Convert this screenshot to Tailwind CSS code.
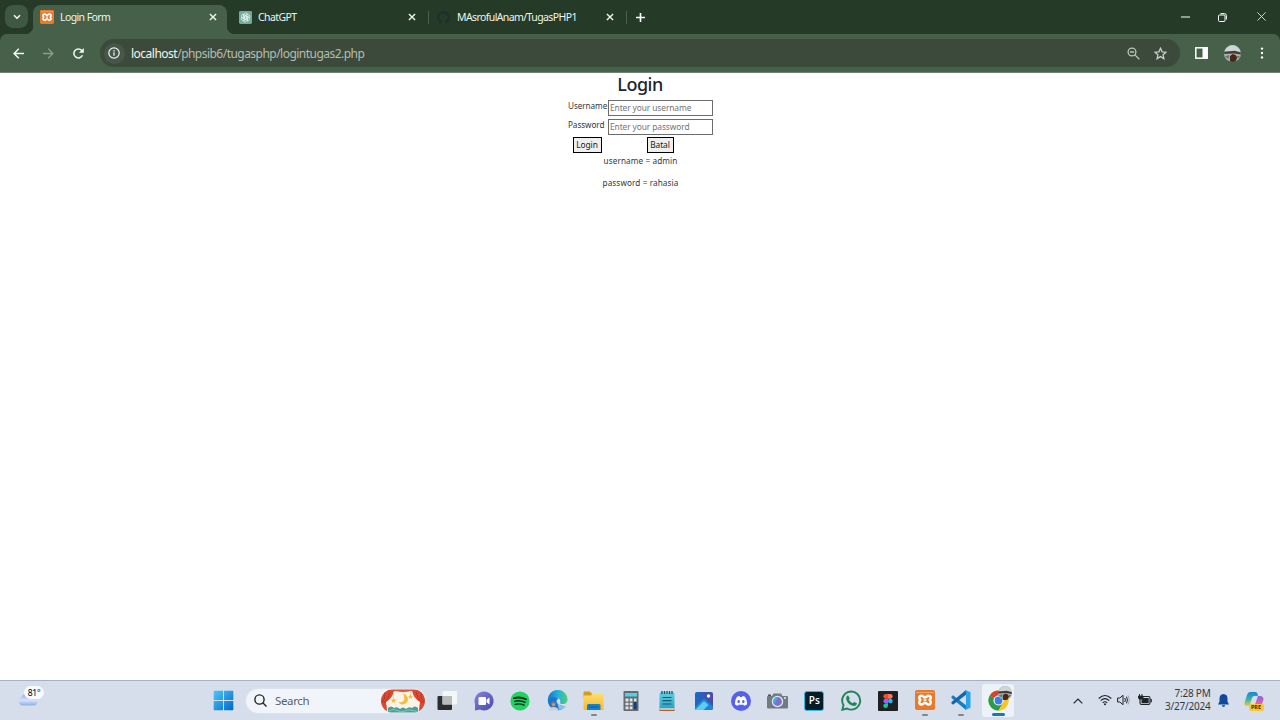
<!DOCTYPE html>
<html lang="en">
<head>
<meta charset="utf-8">
<title>Login Form</title>
<script src="https://cdn.jsdelivr.net/npm/@tailwindcss/browser@4"></script>
</head>
<body class="w-[1280px] h-[720px] overflow-hidden flex flex-col bg-white font-['Noto_Sans',sans-serif] whitespace-nowrap">

<svg class="absolute size-0">
  <defs>
    <linearGradient id="win" x1="0" y1="0" x2="1" y2="1"><stop offset="0" stop-color="#4fc8f7"/><stop offset="1" stop-color="#0067c5"/></linearGradient>
    <linearGradient id="chat" x1="0" y1="0" x2="1" y2="1"><stop offset="0" stop-color="#8483dc"/><stop offset="1" stop-color="#4b47a8"/></linearGradient>
    <linearGradient id="edge" x1="0" y1="0" x2="1" y2="0"><stop offset="0" stop-color="#1a72cf"/><stop offset=".55" stop-color="#25b4d8"/><stop offset="1" stop-color="#52cf70"/></linearGradient>
    <linearGradient id="fold" x1="0" y1="0" x2="0" y2="1"><stop offset="0" stop-color="#ffdb6b"/><stop offset="1" stop-color="#f5b92e"/></linearGradient>
    <linearGradient id="note" x1="0" y1="0" x2="0" y2="1"><stop offset="0" stop-color="#5cd0e2"/><stop offset="1" stop-color="#2f9fbc"/></linearGradient>
    <linearGradient id="pho" x1="0" y1="0" x2="1" y2="0"><stop offset="0" stop-color="#1a69cb"/><stop offset="1" stop-color="#5148a5"/></linearGradient>
    <linearGradient id="cop1" x1="0" y1="0" x2="0" y2="1"><stop offset="0" stop-color="#1d83d8"/><stop offset=".5" stop-color="#30b5ad"/><stop offset="1" stop-color="#f5c534"/></linearGradient>
    <linearGradient id="cop2" x1="0" y1="0" x2="0" y2="1"><stop offset="0" stop-color="#8a63e8"/><stop offset=".5" stop-color="#df62b0"/><stop offset="1" stop-color="#f58a55"/></linearGradient>
    <linearGradient id="cloud" x1="0" y1="0" x2="0" y2="1"><stop offset="0" stop-color="#8fa3d9"/><stop offset=".55" stop-color="#d5e2fb"/><stop offset="1" stop-color="#8eafe8"/></linearGradient>
    <symbol id="xampp" viewBox="0 0 20 20">
      <rect width="20" height="20" rx="2" fill="#e87a2c"/>
      <path d="M1 2.500H19" stroke="#f6b98a" stroke-width=".7"/>
      <path d="M6.500 5.800C3.800 5.800 3.600 8.300 5.300 10 3.600 12 3.900 14.600 6.500 14.600 8.500 14.600 8.300 12.800 10 12.800S11.500 14.600 13.500 14.600C16.100 14.600 16.400 12 14.700 10 16.400 8.300 16.200 5.800 13.500 5.800 11.500 5.800 11.700 7.500 10 7.500S8.500 5.800 6.500 5.800Z" fill="none" stroke="#fff" stroke-width="2.500" stroke-linejoin="round"/>
      <path d="M8.500 10.100H11.500" stroke="#fff" stroke-width="1.600"/>
    </symbol>
    <symbol id="avatar" viewBox="0 0 16 16">
      <circle cx="8" cy="8" r="8" fill="#a9b7b5"/>
      <path d="M1.500 4Q8-3.500 14.500 4L15.500 6H.5Z" fill="#cbd8d8"/>
      <path d="M.2 6.300L10 5.500 15.800 7V9L9 8 .2 8.500Z" fill="#4b3c31"/>
      <path d="M5.500 10.500L8 8.500 11 9.500 12.500 12 11 15.300Q8 16.500 5.500 15.300Z" fill="#49281a"/>
      <path d="M1 10.500L5 9.500 4 13.500ZM12 10L15 10.500 13.500 13Z" fill="#687367"/>
    </symbol>
    <symbol id="close" viewBox="0 0 8 8"><path d="M.9.9L7.1 7.1M7.1.9L.9 7.1" stroke="#eff5ee" stroke-width="1.4"/></symbol>
  </defs>
</svg>

<!-- Tab strip -->
<header class="h-[34px] shrink-0 bg-[#253b28] flex items-end text-[#eef4ed] text-[10.5px]">
  <div class="w-[33px] h-[34px] pl-[5px] pt-[5px] bg-[radial-gradient(circle_at_0_0,transparent_8px,#46604a_8.5px)] bg-[length:8px_8px] bg-no-repeat bg-[position:25px_26px]">
    <button class="size-[23px] rounded-[8px] bg-[#3f5843] flex items-center justify-center">
      <svg class="w-[8px] h-[6px]" viewBox="0 0 8 6" fill="none" stroke="#fff" stroke-width="1.5"><path d="M1 1.2L4 4.2 7 1.2"/></svg>
    </button>
  </div>
  <div class="w-[194px] h-[29px] rounded-t-[8px] bg-[#46604a] flex items-center pl-[7px] pr-[10px] pb-[5px]">
    <svg class="size-[14px]"><use href="#xampp"/></svg>
    <span class="ml-[6px] flex-1 pt-[1px] tracking-[-0.6px]">Login Form</span>
    <svg class="size-[8px]"><use href="#close"/></svg>
  </div>
  <div class="w-[8px] h-[8px] bg-[radial-gradient(circle_at_100%_0,transparent_8px,#46604a_8.5px)]"></div>
  <div class="w-[193px] h-[34px] flex items-center pl-[4px] pr-[12px]">
    <svg class="size-[13px]" viewBox="0 0 14 14"><rect width="14" height="14" rx="1.500" fill="#74aa9c"/><g fill="none" stroke="#edf8f3" stroke-width=".75"><path id="petal" d="M5.200 7.900V4.300A2.200 2.200 0 0 1 9.300 3.300L6.300 5V6.800"/><use href="#petal" transform="rotate(60 7 7)"/><use href="#petal" transform="rotate(120 7 7)"/><use href="#petal" transform="rotate(180 7 7)"/><use href="#petal" transform="rotate(240 7 7)"/><use href="#petal" transform="rotate(300 7 7)"/></g></svg>
    <span class="ml-[6px] flex-1 pt-[1px] tracking-[-0.6px]">ChatGPT</span>
    <svg class="size-[8px]"><use href="#close"/></svg>
  </div>
  <div class="w-[198px] h-[34px] flex items-center pr-[12px]">
    <i class="w-px h-[13px] bg-[#4a624c]"></i>
    <svg class="size-[13px] ml-[8px]" viewBox="0 0 16 16" fill="#202f30"><path d="M8 0C3.58 0 0 3.58 0 8c0 3.54 2.29 6.53 5.47 7.59.4.07.55-.17.55-.38v-1.490c-2.230.49-2.700-.94-2.700-.94-.36-.92-.89-1.170-.89-1.170-.72-.5.06-.49.06-.49.8.06 1.230.83 1.230.83.71 1.210 1.870.86 2.330.66.07-.52.28-.87.51-1.070-1.780-.2-3.640-.89-3.640-3.950 0-.87.31-1.590.82-2.150-.08-.2-.36-1.020.08-2.120 0 0 .67-.22 2.200.82a7.600 7.600 0 0 1 4 0c1.530-1.040 2.200-.82 2.200-.82.44 1.100.16 1.920.08 2.120.51.56.82 1.270.82 2.150 0 3.070-1.870 3.750-3.650 3.950.29.25.54.73.54 1.480v2.190c0 .21.15.46.55.38A8 8 0 0 0 8 0"/></svg>
    <span class="ml-[7px] flex-1 pt-[1px] tracking-[-0.6px]">MAsrofulAnam/TugasPHP1</span>
    <svg class="size-[8px]"><use href="#close"/></svg>
  </div>
  <div class="h-[34px] flex items-center">
    <i class="w-px h-[13px] bg-[#4a624c]"></i>
    <svg class="size-[9px] ml-[9px]" viewBox="0 0 9 9" stroke="#fff" stroke-width="1.6"><path d="M4.500 0V9M0 4.500H9"/></svg>
  </div>
  <div class="ml-auto h-[34px] flex items-center pr-[14px]">
    <svg class="w-[9px] h-[9px]" viewBox="0 0 9 9"><path d="M0 4H9" stroke="#fff"/></svg>
    <svg class="size-[9px] ml-[28px]" viewBox="0 0 9 9" fill="none" stroke="#fff"><rect x=".5" y="2" width="6.500" height="6.500" rx="1"/><path d="M2.500.6H6.500Q8.400.6 8.400 2.500V6.500"/></svg>
    <svg class="size-[9px] ml-[30px] -mt-px" viewBox="0 0 9 9" stroke="#dfe7df" stroke-width=".9"><path d="M.4.4L8.600 8.600M8.600.4L.4 8.600"/></svg>
  </div>
</header>

<!-- Toolbar -->
<div class="h-[39px] shrink-0 bg-[#253b28]">
  <div class="h-full rounded-t-[7px] bg-[#46604a] border-b border-[#71836f] flex items-center pl-[13px] pr-[16px]">
    <svg class="size-[11px]" viewBox="0 0 11 11" fill="none" stroke="#f4f8f3" stroke-width="1.500"><path d="M11 5.500H1.200M5.800.8L1.100 5.500 5.800 10.200"/></svg>
    <svg class="size-[11px] ml-[19px]" viewBox="0 0 11 11" fill="none" stroke="#8a9c8b" stroke-width="1.300"><path d="M0 5.500H9.800M5.200.8L9.900 5.500 5.200 10.200"/></svg>
    <svg class="size-[11px] ml-[19px]" viewBox="0 0 11 11"><path d="M9.500 7.300A4.500 4.500 0 1 1 8.800 2.500L10 3.800" fill="none" stroke="#f4f8f3" stroke-width="1.500"/><path d="M10.800 0V4.800H6Z" fill="#f4f8f3"/></svg>
    <div class="ml-[16px] w-[1080px] h-[28px] rounded-full bg-[#3c4a3c] flex items-center pl-[3.5px] pr-[13px]">
      <div class="size-[21px] rounded-full bg-[#46564a] flex items-center justify-center">
        <svg class="size-[12px]" viewBox="0 0 12 12" fill="none" stroke="#f4f8f3" stroke-width="1.200"><circle cx="6" cy="6" r="5.200"/><path d="M6 5.300V8.800M6 3.100V4.400"/></svg>
      </div>
      <span class="ml-[6.5px] flex-1 pt-[1px] text-[12px] leading-[16px] tracking-[-0.53px] text-[#b4beb1]"><span class="text-[#f2f6f0] tracking-[-0.5px]">localhost</span>/phpsib6/tugasphp/logintugas2.php</span>
      <svg class="size-[13px]" viewBox="0 0 13 13" fill="none" stroke="#bbc6ba" stroke-width="1.300"><circle cx="5" cy="5" r="3.900"/><path d="M7.900 7.900L12.300 12.300M3 5H7"/></svg>
      <svg class="size-[13px] ml-[14px]" viewBox="0 0 13 13" fill="none" stroke="#c6d0c5" stroke-width="1.300"><path d="M6.500 1.300L8.100 4.800 12 5.200 9.100 7.800 9.900 11.600 6.500 9.600 3.100 11.600 3.900 7.800 1 5.200 4.900 4.800Z"/></svg>
    </div>
    <svg class="w-[13px] h-[12px] ml-[15px]" viewBox="0 0 13 12"><rect x=".8" y=".8" width="11.400" height="10.400" fill="none" stroke="#fff" stroke-width="1.500"/><path d="M7.500 1H12V11H7.500Z" fill="#fff"/></svg>
    <svg class="size-[17px] ml-[16px]"><use href="#avatar"/></svg>
    <svg class="w-[4px] h-[12px] ml-auto" viewBox="0 0 4 12" fill="#fff"><circle cx="2" cy="1.600" r="1.200"/><circle cx="2" cy="6" r="1.200"/><circle cx="2" cy="10.400" r="1.200"/></svg>
  </div>
</div>

<!-- Page -->
<main class="flex-1 min-h-0 flex flex-col items-center text-[#33373b] text-[8.2px]">
  <h1 class="h-[27px] text-[18px] leading-[22px] font-medium tracking-[-0.5px] text-[#212529]">Login</h1>
  <form class="w-[145px] flex flex-col">
    <div class="flex h-[19px]">
      <label class="w-[40px] pl-[0.5px] leading-[12px] tracking-[-0.08px]">Username</label>
      <input class="w-[105px] h-[16px] border border-[#6c6c6c] px-[1.5px] pb-[1px] placeholder:text-[#757575] text-[8.4px] tracking-[-0.1px]" placeholder="Enter your username">
    </div>
    <div class="flex h-[18px]">
      <label class="w-[40px] pl-[0.5px] leading-[12px] tracking-[-0.08px]">Password</label>
      <input class="w-[105px] h-[16px] border border-[#6c6c6c] px-[1.5px] pb-[1px] placeholder:text-[#757575] text-[8.4px] tracking-[-0.1px]" placeholder="Enter your password">
    </div>
    <div class="flex pl-[5px] gap-[45px] h-[17px] text-[8.4px] leading-[12px] text-[#222]">
      <button type="button" class="w-[29px] h-[16px] border border-black bg-[#efefef] tracking-[-0.1px]">Login</button>
      <button type="button" class="w-[27px] h-[16px] border border-black bg-[#efefef] tracking-[-0.1px]">Batal</button>
    </div>
  </form>
  <p class="h-[22px] leading-[13px] pl-[1px] tracking-[0.1px]">username = admin</p>
  <p class="leading-[13px] pl-[1px] tracking-[0.1px]">password = rahasia</p>
</main>

<!-- Taskbar -->
<footer class="h-[40px] shrink-0 bg-[#d5deea] border-t border-[#a9b1c0] flex items-center">
  <div class="w-[213px] h-full pl-[17px] pt-[5px] flex">
    <svg class="w-[21px] h-[14px] mt-[6px]" viewBox="0 0 21 14"><path d="M5 13.500A4.500 4.500 0 0 1 4.500 5 6.500 6.500 0 0 1 16 5.500 4 4 0 0 1 17 13.500Z" fill="url(#cloud)"/></svg>
    <span class="-ml-[14px] w-[20px] h-[13px] rounded-full bg-[#f8fafd] text-[8.5px] leading-[13px] text-center tracking-[-0.3px] text-black relative">81°</span>
  </div>
  <svg class="size-[21px]" viewBox="0 0 21 21" fill="url(#win)"><path d="M1.500.7H19.500Q20.300.7 20.300 1.500V19.500Q20.300 20.300 19.500 20.300H1.500Q.7 20.300.7 19.500V1.500Q.7.7 1.500.7Z"/><path d="M10.500 0V21M0 10.500H21" stroke="#d5deea"/></svg>
  <div class="ml-[11px] w-[182px] h-[26px] rounded-full bg-[#f1f5fb] border border-[#dbe2ec] flex items-center pl-[8px]">
    <svg class="size-[13px]" viewBox="0 0 13 13" fill="none" stroke="#202225" stroke-width="1.400"><circle cx="5.500" cy="5.500" r="4.600"/><path d="M8.800 8.800L12.500 12.500"/></svg>
    <span class="ml-[8px] flex-1 text-[11.5px] text-[#5b5f66] tracking-[-0.35px]">Search</span>
    <svg class="w-[45px] h-[24px]" viewBox="0 0 45 24">
      <clipPath id="pill"><rect y=".5" width="44" height="23" rx="11.500"/></clipPath>
      <g clip-path="url(#pill)">
        <rect width="45" height="24" fill="#faf3e6"/>
        <path d="M0 0H44V2Q37 4 30 2 22 4 15 2 8 4 0 2Z" fill="#e2553c"/>
        <path d="M0 1H13Q12 9 5 13 6 18 6 24H0ZM44 1H31Q32 9 39 13 38 18 38 24H44Z" fill="#d94a33"/>
        <path d="M4 3Q5 9 1 14M9 3Q8 9 3 14M40 3Q39 9 43 14M35 3Q36 9 41 14" stroke="#b53527" fill="none"/>
        <path d="M7 19Q10 16 13 19 16 17 19 20 22 17 25 20 28 17 31 19 34 16 37 19V24H7Z" fill="#4d9e98"/>
        <path d="M8 22Q12 19 16 21.500T24 22 32 21.500 38 22" stroke="#84c5ba" fill="none"/>
        <path d="M22 5A5.200 5.200 0 1 1 17.500 13.200Q22.500 14 23.300 10 23.700 7 22 5Z" fill="#f3bd3e"/>
        <path d="M12.500 8.500L13.300 10.500 15.500 10.700 13.800 12 14.400 14 12.500 12.900 10.700 14 11.300 12 9.600 10.700 11.700 10.500ZM29.500 5L30.200 6.700 32 6.900 30.700 8 31 9.800 29.500 8.900 28 9.800 28.300 8 27 6.900 28.800 6.700Z" fill="#f3bd3e"/>
        <path d="M12.500 3V9M29.500 3V6M22 3V6" stroke="#e8c987" stroke-width=".6"/>
      </g>
    </svg>
  </div>

  <nav class="ml-[1.5px] h-full grid grid-flow-col auto-cols-[36.75px] items-center justify-items-center">
    <svg class="size-[20px]" viewBox="0 0 20 20"><rect x=".5" y="5" width="14.500" height="14" rx="1" fill="#2d2d2f"/><rect x="5.500" y="0" width="14.500" height="13.500" rx="1" fill="#f9fafa" fill-opacity=".85"/><path d="M5.500 5H15V13.500H5.500Z" fill="#b9bbbd"/></svg>
    <svg class="size-[20px]" viewBox="0 0 20 20"><path d="M10 .5A9.500 9.500 0 1 1 6 18.600L1 19.500V13A9.500 9.500 0 0 1 10 .5Z" fill="url(#chat)"/><rect x="4.500" y="6" width="7.500" height="8" rx="1" fill="#fff"/><path d="M12.500 8.800L15.500 6.500V13.500L12.500 11.200Z" fill="#fff"/></svg>
    <svg class="size-[20px]" viewBox="0 0 20 20"><circle cx="10" cy="10" r="9.600" fill="#1fd362"/><g fill="none" stroke="#102816" stroke-linecap="round"><path d="M4 7.200Q10.500 5.400 16 8.300" stroke-width="1.800"/><path d="M4.700 10.400Q10 8.900 15 11.300" stroke-width="1.500"/><path d="M5.200 13.400Q10 12.200 14 14.200" stroke-width="1.300"/></g></svg>
    <svg class="size-[21px]" viewBox="0 0 21 21"><path d="M.8 10A9.700 9.700 0 0 1 20.500 9.500C20.500 13 17.500 14.500 14.500 14 12.500 13.500 13.500 12.500 13.200 10.500 12.500 7.500 7 6 .8 10Z" fill="url(#edge)"/><path d="M.8 10C4.500 5.500 10 7 11.500 9 8 9.500 8.500 16 18.500 16A9.800 9.800 0 0 1 .8 10Z" fill="#1976cf"/><path d="M10 11Q11 16.500 18.500 16 16 19.500 12 20Z" fill="#8fbdea"/><circle cx="6.500" cy="14" r="2.700" fill="#77736c"/><path d="M1.500 20.500Q2 17 6.500 17T11.500 20.500Z" fill="#cbd0d4"/><circle cx="6.500" cy="14.500" r="1.500" fill="#bca28c"/></svg>
    <div class="h-full flex flex-col items-center pt-[9px]">
      <svg class="size-[21px]" viewBox="0 0 21 21"><path d="M.5 2.500Q.5 1.500 1.500 1.500H7L9 4H18V8H.5Z" fill="#d99a22"/><path d="M.5 5.500H8L9.500 4H19Q20.500 4 20.500 5.500V19Q20.500 20 19.500 20H1.500Q.5 20 .5 19Z" fill="url(#fold)"/><path d="M4 20V15.500Q4 14 5.500 14H16Q17.500 14 17.500 15.500V20Z" fill="#1681ca"/><path d="M6 17H15.500" stroke="#0d5a9c"/></svg>
      <i class="mt-[3px] w-[6px] h-[2px] rounded-full bg-[#81868e]"></i>
    </div>
    <svg class="size-[20px]" viewBox="0 0 20 20"><rect x="2.500" width="15" height="20" rx="1" fill="#666b70"/><rect x="4" y="2" width="12" height="3.500" fill="#4fd1e8"/><path d="M4.500 7.500H7.500V10.500H4.500ZM8.700 7.500H11.500V10.500H8.700ZM13 7.500H15.500V10.500H13ZM4.500 11.700H7.500V14.300H4.500ZM8.700 11.700H11.500V14.300H8.700ZM4.500 15.500H7.500V18.300H4.500ZM8.700 15.500H11.500V18.300H8.700Z" fill="#e2e5e7"/><path d="M12.700 11H15.700V18.300H12.700Z" fill="#173f79"/></svg>
    <svg class="size-[20px]" viewBox="0 0 20 20"><rect x="2.500" y="1.500" width="15" height="16.500" rx="1" fill="url(#note)"/><path d="M2.500 18H17.500V20H2.500Z" fill="#b95b25"/><path d="M3 17.500H17V18.600H3Z" fill="#fff"/><path d="M5 0V3M7.500 0V3M10 0V3M12.500 0V3M15 0V3" stroke="#145569" stroke-width="1.300"/><path d="M5.500 6.500H14.500M5.500 9.700H14.500M5.500 13H14.500" stroke="#155a70" stroke-width="1.200"/></svg>
    <svg class="size-[20px]" viewBox="0 0 20 20"><rect x="1" y="1" width="18" height="18" rx="2" fill="url(#pho)"/><path d="M1 16L8.500 8.500Q10 7.200 11.500 8.500L19 15.500V17Q19 19 17 19H3Q1 19 1 17Z" fill="#1b86d2"/><path d="M1.500 18.500L9 10.800Q10 10 11 10.800L14.500 14 9.500 19H3Q2 19 1.500 18.500Z" fill="#5ccbf5"/><circle cx="14.500" cy="5" r="1.700" fill="#fff"/></svg>
    <svg class="size-[20px]" viewBox="0 0 20 20"><circle cx="10" cy="10" r="10" fill="#5561ea"/><path d="M6 5.800Q7.300 5.100 8.500 5L9 5.900H11L11.500 5Q12.700 5.100 14 5.800 16.500 9.500 16.200 13.200 14.800 14.400 13 14.800L12.200 13.600Q10 14.100 7.800 13.600L7 14.800Q5.200 14.400 3.800 13.200 3.500 9.500 6 5.800Z" fill="#fff"/><ellipse cx="7.700" cy="10.500" rx="1.300" ry="1.500" fill="#5561ea"/><ellipse cx="12.300" cy="10.500" rx="1.300" ry="1.500" fill="#5561ea"/></svg>
    <svg class="size-[21px]" viewBox="0 0 21 21"><path d="M6.500 3.500H14L15.500 6H20Q21 6 21 7V17.500Q21 18.500 20 18.500H1Q0 18.500 0 17.500V7Q0 6 1 6H5Z" fill="#737b82"/><path d="M1 4.500H4V6H1Z" fill="#4d555c"/><circle cx="10.500" cy="11.500" r="5.700" fill="#dfe8ee"/><circle cx="10.500" cy="11.500" r="4.400" fill="#7f70ce"/><path d="M7 14A4.400 4.400 0 0 1 11 7.100Z" fill="#35b3e8"/><circle cx="18" cy="8" r="1" fill="#eee"/></svg>
    <div class="size-[20px] rounded-[3px] border-[1.5px] border-[#31b9d9] bg-[#061d28] text-white text-[10px] leading-[16px] font-semibold text-center font-['Open_Sans',sans-serif]">Ps</div>
    <svg class="size-[21px]" viewBox="0 0 21 21"><path d="M1.300 19.700L2.500 15.200A9 9 0 1 1 6 18.500Z" fill="none" stroke="#218456" stroke-width="1.900"/><path d="M7 5.300L8.800 8.300 7.900 9.700Q9.300 12.300 11.800 13.200L13.100 11.900 15.900 13.300Q15.700 16 13 16 7 15 5.300 9.500 4.800 6.300 7 5.300Z" fill="#218456"/></svg>
    <svg class="size-[20px]" viewBox="0 0 20 20"><rect width="20" height="20" rx="1" fill="#202023"/><path d="M10 3H7.700A2.350 2.350 0 0 0 7.700 7.700H10Z" fill="#f24e1e"/><path d="M10 3H12.300A2.350 2.350 0 0 1 12.300 7.700H10Z" fill="#ff7262"/><path d="M10 7.700H7.700A2.350 2.350 0 0 0 7.700 12.400H10Z" fill="#a259ff"/><circle cx="12.350" cy="10" r="2.350" fill="#1abcfe"/><path d="M10 12.400H7.700A2.350 2.350 0 1 0 10 14.800Z" fill="#0acf83"/></svg>
    <div class="h-full flex flex-col items-center pt-[9px]">
      <svg class="size-[20px]"><use href="#xampp"/></svg>
      <i class="mt-[4px] w-[6px] h-[2px] rounded-full bg-[#81868e]"></i>
    </div>
    <div class="h-full flex flex-col items-center pt-[9px]">
      <svg class="size-[20px]" viewBox="0 0 20 20"><path d="M.5 6.500L2 5.300 15 15.300V20L.5 8Z" fill="#147ec4"/><path d="M.5 13.500L2 14.700 15 4.700V0L.5 12Z" fill="#1268ab"/><path d="M14.500 0L19.500 2.300V17.700L14.500 20 13.800 19.400 15 18V2L13.800.6Z" fill="#2ba4e9"/></svg>
      <i class="mt-[4px] w-[6px] h-[2px] rounded-full bg-[#81868e]"></i>
    </div>
    <div class="w-[32px] h-[33px] rounded-[3px] bg-[#edf2f8] flex flex-col items-center pt-[6px] relative">
      <svg class="size-[21px]" viewBox="0 0 21 21"><circle cx="10.500" cy="10.500" r="10" fill="#f7c725"/><path d="M10.500 10.500L1.800 5.500A10 10 0 0 1 19.200 5.500Z" fill="#e1402f"/><path d="M1.800 5.500A10 10 0 0 0 10.500 20.500L14.800 13Z" fill="#289b4d"/><path d="M10.500 5.500H19.200A10 10 0 0 1 10.500 20.500L14.800 13Z" fill="#f7c725"/><circle cx="10.500" cy="10.500" r="5" fill="#fff"/><circle cx="10.500" cy="10.500" r="3.900" fill="#3c7ee9"/></svg>
      <svg class="size-[14px] absolute top-[2px] right-[2px]"><use href="#avatar"/></svg>
      <i class="mt-[2px] w-[13px] h-[3px] rounded-full bg-[#1476cb]"></i>
    </div>
  </nav>

  <div class="ml-auto h-full flex items-center pr-[15.5px]">
    <svg class="w-[10px] h-[6px]" viewBox="0 0 10 6" fill="none" stroke="#202328" stroke-width="1.200"><path d="M.7 5.300L5 1 9.300 5.300"/></svg>
    <svg class="w-[14px] h-[12px] ml-[15px] -mt-[2px]" viewBox="0 0 14 12" fill="none" stroke="#202328" stroke-width="1.100"><path d="M.7 4.500Q7-1.500 13.300 4.500M2.700 6.700Q7 2.600 11.300 6.700M4.700 8.800Q7 6.700 9.300 8.800"/><circle cx="7" cy="10.300" r="1" fill="#202328" stroke="none"/></svg>
    <svg class="w-[13px] h-[12px] ml-[5px] -mt-px" viewBox="0 0 13 12" fill="none" stroke="#202328" stroke-width="1"><path d="M.6 4H2.800L6 1.300V10.700L2.800 8H.6Z"/><path d="M7.800 4Q9 6 7.800 8M9.500 2.700Q11.400 6 9.500 9.300"/><path d="M11.100 1.500Q13.700 6 11.100 10.500" stroke="#a0a8b3"/></svg>
    <svg class="w-[14px] h-[12px] ml-[8px] -mt-[2px]" viewBox="0 0 14 12"><rect x="2" y="2.500" width="10" height="8" rx="1.500" fill="none" stroke="#202328" stroke-width="1.100"/><path d="M5 4H10.700V9.200H3.500V6.500Z" fill="#202328"/><path d="M12.500 5H13.800V8.200H12.500Z" fill="#202328"/><path d="M1.500 0V2M4 0V2M.5 2H5V4Q4.800 5.200 2.800 5.300 .6 5.200.5 4Z" fill="#202328" stroke="#202328" stroke-width=".9"/></svg>
    <div class="ml-[5px] w-[54px] text-right text-[10px] leading-[13px] text-[#35383d] tracking-[-0.22px] -mt-px">7:28 PM<br>3/27/2024</div>
    <svg class="w-[11px] h-[13px] ml-[7px]" viewBox="0 0 11 13" fill="#11489c"><path d="M5.500 0Q9.500.3 9.500 4.500V7.500L11 10.500H0L1.500 7.500V4.500Q1.500.3 5.500 0ZM3.800 11.300H7.200Q7 13 5.500 13T3.800 11.300Z"/></svg>
    <div class="ml-[15px] w-[21px] h-[20px] flex flex-col relative">
      <svg class="size-[20px]" viewBox="0 0 20 20"><path d="M6 1H11.500Q13 1 13.500 2.500L14 5H10.500Q8.700 5 8 7L6 13.500Q5.500 15 4 15H3Q0 15 .6 11.500L3 4Q4 1 6 1Z" fill="url(#cop1)"/><path d="M14 5H16Q19.500 5 19.500 8.500L17 16Q16 19 14 19H8.500Q7 19 6.500 17L6 15H9Q10.500 15 11 13.500Z" fill="url(#cop2)"/></svg>
      <span class="absolute left-[5px] top-[13.5px] w-[15px] h-[7px] rounded-[2px] bg-[#f7c735] text-[5.5px] leading-[7px] font-bold text-center text-[#3a2b12]">PRE</span>
    </div>
  </div>
</footer>
</body>
</html>
